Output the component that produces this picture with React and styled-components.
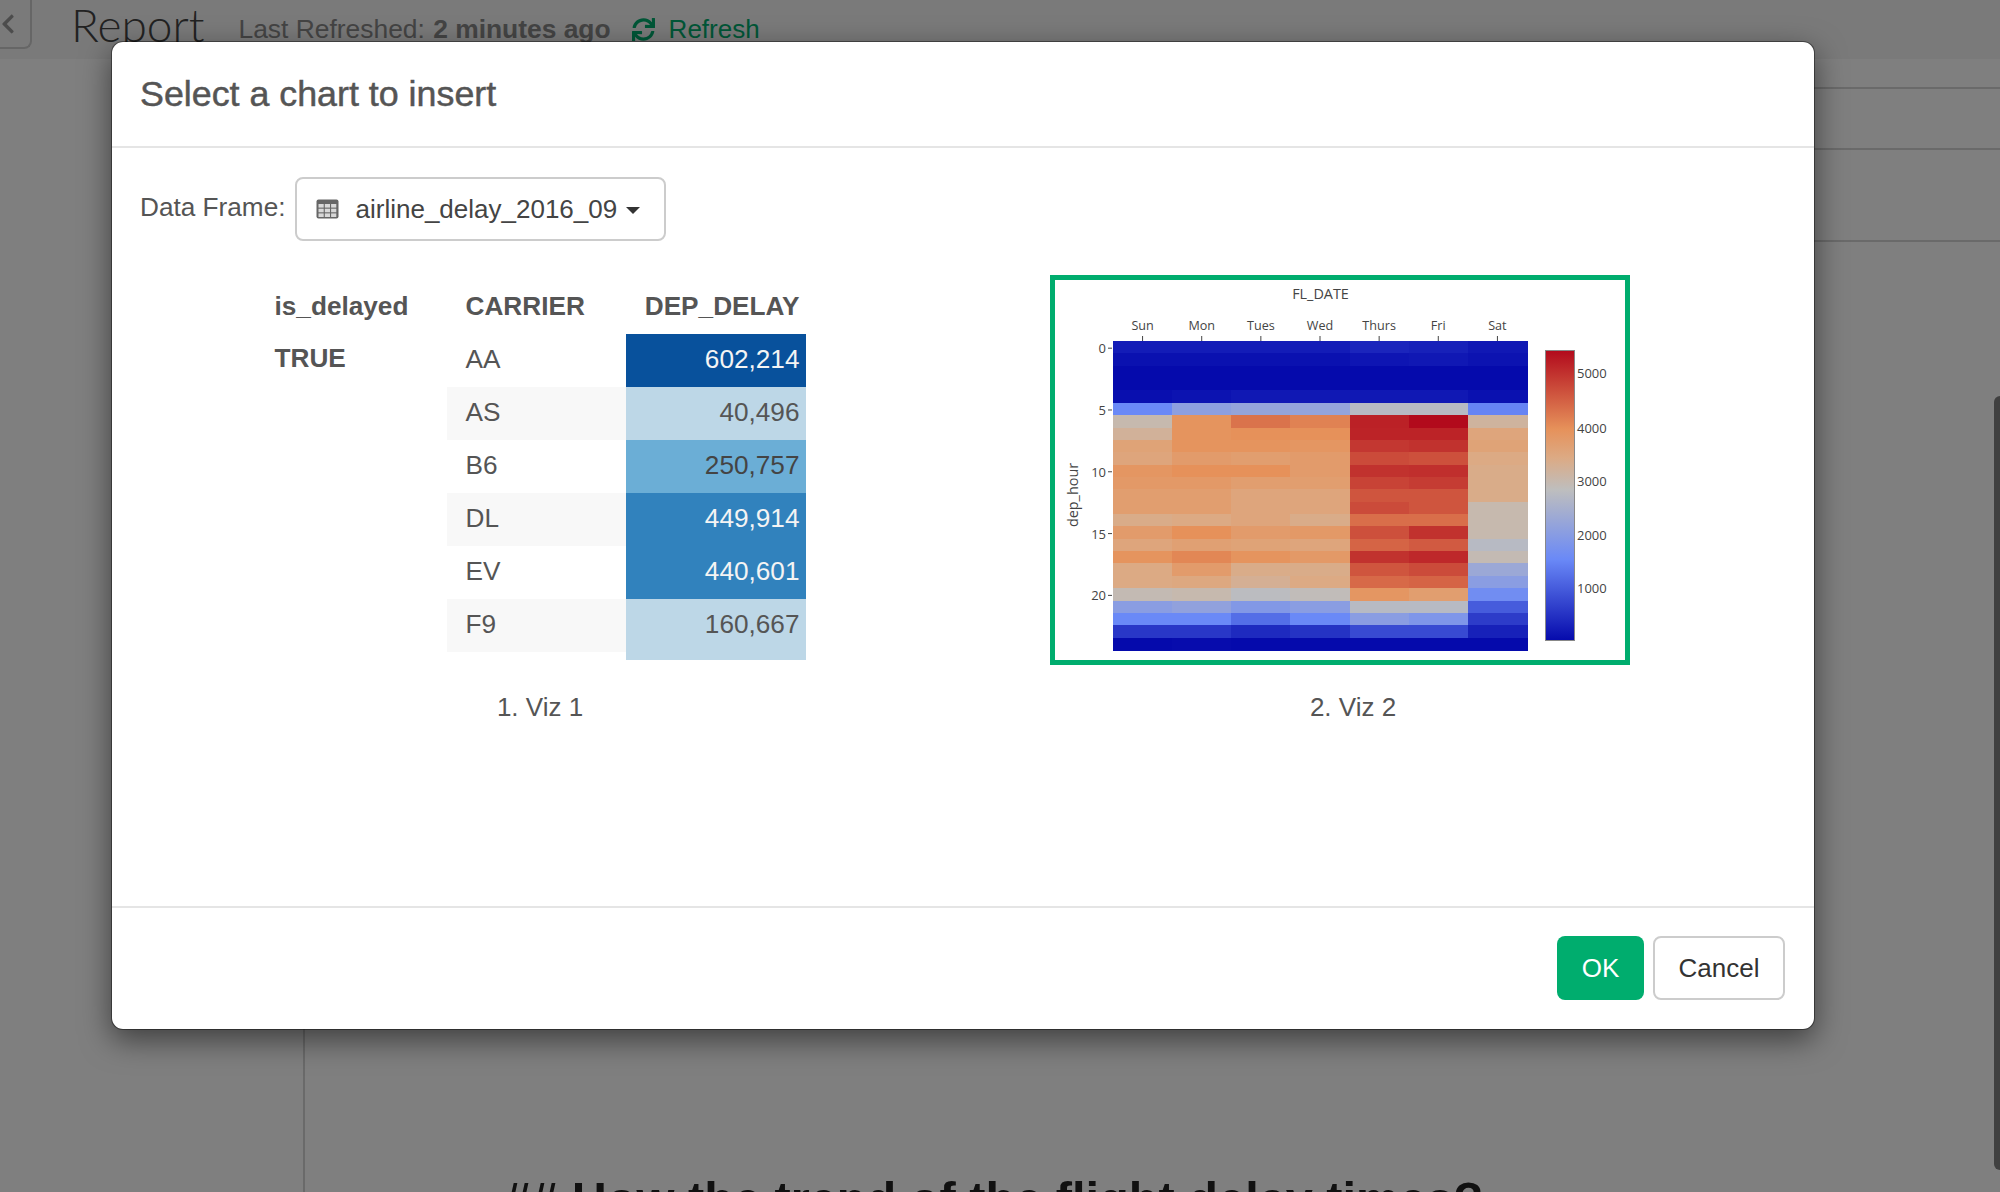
import React from "react"
import styled, { createGlobalStyle } from "styled-components"
import { FaChevronLeft, FaSync } from "react-icons/fa"

const GlobalStyle = createGlobalStyle`
  html, body {
    margin: 0;
    padding: 0;
    background: #fff;
  }
  body {
    font-family: "Liberation Sans", Arial, sans-serif;
    overflow: hidden;
  }
`

const Page = styled.div`
  position: relative;
  width: 2000px;
  height: 1192px;
  overflow: hidden;
  background: #fff;
`

const TopBar = styled.header`
  height: 59px;
  background: #f4f4f4;
  display: flex;
  align-items: flex-start;
`

const BackButton = styled.button`
  width: 32px;
  height: 49px;
  border: 2px solid #ccc;
  border-left: none;
  border-top: none;
  border-radius: 0 0 8px 0;
  background: #f4f4f4;
  color: #999;
  padding: 0;
  display: flex;
  align-items: flex-start;
  font-size: 22px;
  svg {
    margin: 13px 0 0 -3px;
  }
`

const PageTitle = styled.h1`
  margin: 2px 0 0 39px;
  font-family: "Lato", "Liberation Sans", sans-serif;
  font-weight: 300;
  font-size: 46px;
  line-height: 46px;
  color: #444;
`

const RefreshInfo = styled.div`
  margin: 13px 0 0 34px;
  font-size: 26.4px;
  line-height: 32px;
  color: #888;
  b {
    margin-left: 1px;
  }
`

const RefreshLink = styled.a`
  margin: 13px 0 0 21px;
  display: flex;
  align-items: center;
  gap: 14px;
  font-size: 26px;
  line-height: 32px;
  color: #00ad6e;
`

const Workspace = styled.div`
  display: grid;
  grid-template-columns: 305px 1fr;
  height: 1133px;
`

const Sidebar = styled.aside`
  border-right: 2px solid #d4d4d4;
`

const Editor = styled.main`
  display: flex;
  flex-direction: column;
`

const ToolRow = styled.div`
  height: ${(p) => p.$height}px;
  border-bottom: 2px solid #d4d4d4;
  box-sizing: border-box;
`

const DocHeading = styled.h2`
  margin: 929px 0 0 199px;
  font-size: 48.7px;
  line-height: 56px;
  font-weight: 700;
  color: #222;
  white-space: nowrap;
`

const Scrollbar = styled.div`
  position: absolute;
  right: 0;
  top: 396px;
  width: 6px;
  height: 774px;
  background: #808080;
  border-radius: 6px 0 0 6px;
`

const Overlay = styled.div`
  position: absolute;
  inset: 0;
  background: rgba(0, 0, 0, 0.5);
  padding: 41px 0 0 111px;
`

const Modal = styled.div`
  width: 1704px;
  height: 989px;
  box-sizing: border-box;
  display: flex;
  flex-direction: column;
  background: #fff;
  border: 1px solid rgba(0, 0, 0, 0.4);
  border-radius: 12px;
  box-shadow: 0 10px 30px rgba(0, 0, 0, 0.5);
  background-clip: padding-box;
`

const ModalHeader = styled.div`
  height: 106px;
  box-sizing: border-box;
  padding-left: 28px;
  display: flex;
  align-items: center;
  border-bottom: 2px solid #e5e5e5;
`

const ModalTitle = styled.h4`
  margin: 0;
  font-size: 35.8px;
  font-weight: 400;
  color: #555;
  -webkit-text-stroke: 0.5px #555;
`

const ModalBody = styled.div`
  flex: 1;
  padding: 29px 0 0 28px;
`

const FrameRow = styled.div`
  display: flex;
  align-items: center;
  gap: 9px;
  height: 64px;
`

const FieldLabel = styled.label`
  font-size: 26.2px;
  color: #555;
  padding-bottom: 3px;
`

const Select = styled.button`
  width: 371px;
  height: 64px;
  box-sizing: border-box;
  display: flex;
  align-items: center;
  padding: 0 0 0 19px;
  background: #fff;
  border: 2px solid #ccc;
  border-radius: 8px;
  font-family: inherit;
  font-size: 26px;
  color: #444;
`

const SelectText = styled.span`
  margin-left: 17px;
  padding-top: 1px;
`

const Caret = styled.span`
  width: 0;
  height: 0;
  margin-left: 9px;
  margin-top: 2px;
  border-left: 7px solid transparent;
  border-right: 7px solid transparent;
  border-top: 7px solid #333;
`

const VizGrid = styled.div`
  display: grid;
  grid-template-columns: 800px 800px;
  column-gap: 13px;
  margin-top: 34px;
`

const VizCard = styled.div`
  display: flex;
  flex-direction: column;
`

const Preview = styled.div`
  height: 390px;
  display: flex;
  justify-content: center;
  align-items: flex-start;
`

const Caption = styled.div`
  margin-top: 26px;
  font-size: 26px;
  line-height: 32px;
  text-align: center;
  color: #555;
`

const Table = styled.table`
  width: 531px;
  table-layout: fixed;
  border-collapse: collapse;
  margin-top: 6px;
  font-size: 26.2px;
  color: #555;
`

const HeadCell = styled.th`
  height: 53px;
  padding: 0 ${(p) => (p.$right ? "6px" : "0")} 2px ${(p) => (p.$pad ? "19px" : "0")};
  text-align: ${(p) => (p.$right ? "right" : "left")};
  font-weight: 700;
  box-sizing: border-box;
`

const GroupCell = styled.td`
  vertical-align: top;
  font-weight: 700;
  padding: 8px 0 0;
  line-height: 32px;
`

const CarrierCell = styled.td`
  height: 53px;
  padding: 0 0 2px 19px;
  box-sizing: border-box;
  background: ${(p) => (p.$striped ? "#f8f8f8" : "#fff")};
`

const ValueCell = styled.td`
  text-align: right;
  padding: 0 6px 2px 0;
  background: ${(p) => p.$bg};
  color: ${(p) => p.$fg};
`

const TailRow = styled.tr`
  height: 8px;
`

const ChartFrame = styled.div`
  width: 580px;
  height: 390px;
  box-sizing: border-box;
  margin-right: 26px;
  border: 5px solid #00ad6e;
`

const ChartSvg = styled.svg`
  display: block;
  font-family: "Open Sans", "Liberation Sans", sans-serif;
  fill: #444;
`

const OkButton = styled.button`
  width: 87px;
  height: 64px;
  border: none;
  border-radius: 8px;
  background: #00ad6e;
  color: #fff;
  font-family: inherit;
  font-size: 26px;
`

const CancelButton = styled.button`
  width: 132px;
  height: 64px;
  border: 2px solid #ccc;
  border-radius: 8px;
  background: #fff;
  color: #333;
  font-family: inherit;
  font-size: 26px;
`

const ModalFooter = styled.div`
  height: 123px;
  box-sizing: border-box;
  padding: 28px 29px 0 0;
  border-top: 2px solid #e5e5e5;
  display: flex;
  justify-content: flex-end;
  gap: 9px;
`

const rows = [
  { carrier: "AA", value: "602,214", bg: "#08519c", fg: "#f4f4f4" },
  { carrier: "AS", value: "40,496", bg: "#bdd7e7", fg: "#555" },
  { carrier: "B6", value: "250,757", bg: "#6baed6", fg: "#444" },
  { carrier: "DL", value: "449,914", bg: "#3182bd", fg: "#f4f4f4" },
  { carrier: "EV", value: "440,601", bg: "#3182bd", fg: "#f4f4f4" },
  { carrier: "F9", value: "160,667", bg: "#bdd7e7", fg: "#555" },
]

const days = ["Sun", "Mon", "Tues", "Wed", "Thurs", "Fri", "Sat"]

// share of the colour scale per hour (row) and weekday (column)
const heat = [
  [0.04, 0.04, 0.04, 0.04, 0.06, 0.05, 0.03],
  [0.015, 0.015, 0.015, 0.015, 0.025, 0.03, 0.02],
  [0, 0, 0, 0, 0, 0, 0],
  [0, 0, 0, 0, 0, 0, 0],
  [0.01, 0.02, 0.03, 0.03, 0.03, 0.03, 0.015],
  [0.28, 0.38, 0.4, 0.4, 0.5, 0.5, 0.27],
  [0.55, 0.72, 0.79, 0.76, 0.955, 1, 0.58],
  [0.59, 0.72, 0.73, 0.73, 0.95, 0.95, 0.65],
  [0.66, 0.72, 0.72, 0.71, 0.91, 0.92, 0.66],
  [0.65, 0.69, 0.68, 0.69, 0.87, 0.86, 0.63],
  [0.71, 0.73, 0.73, 0.69, 0.92, 0.925, 0.62],
  [0.7, 0.7, 0.68, 0.68, 0.885, 0.9, 0.62],
  [0.68, 0.68, 0.65, 0.65, 0.85, 0.85, 0.62],
  [0.68, 0.68, 0.65, 0.65, 0.87, 0.85, 0.55],
  [0.62, 0.63, 0.65, 0.62, 0.8, 0.8, 0.55],
  [0.69, 0.73, 0.69, 0.7, 0.86, 0.92, 0.55],
  [0.65, 0.67, 0.66, 0.65, 0.82, 0.84, 0.5],
  [0.72, 0.75, 0.72, 0.7, 0.92, 0.94, 0.54],
  [0.63, 0.69, 0.62, 0.62, 0.85, 0.87, 0.42],
  [0.63, 0.64, 0.6, 0.63, 0.81, 0.82, 0.37],
  [0.54, 0.55, 0.51, 0.53, 0.71, 0.68, 0.3],
  [0.37, 0.39, 0.35, 0.37, 0.5, 0.5, 0.18],
  [0.28, 0.28, 0.22, 0.28, 0.37, 0.34, 0.11],
  [0.1, 0.1, 0.07, 0.09, 0.14, 0.14, 0.05],
  [0, 0.005, 0, 0, 0, 0, 0],
]

const scale = [
  [0, [5, 10, 172]],
  [0.28, [106, 137, 247]],
  [0.52, [190, 190, 190]],
  [0.63, [220, 170, 132]],
  [0.73, [230, 145, 90]],
  [1, [178, 10, 28]],
]

function colorAt(t) {
  for (let i = 1; i < scale.length; i++) {
    const [t0, c0] = scale[i - 1]
    const [t1, c1] = scale[i]
    if (t <= t1) {
      const k = (t - t0) / (t1 - t0)
      const c = c0.map((v, j) => Math.round(v + (c1[j] - v) * k))
      return `rgb(${c.join(",")})`
    }
  }
  return "rgb(178,10,28)"
}

const HEAT_X = 58
const HEAT_Y = 61
const CELL_W = 414 / 7
const CELL_H = 309 / 25

function Heatmap() {
  return (
    <ChartSvg width="570" height="380" viewBox="0 0 570 380">
      <defs>
        <linearGradient id="bar" x1="0" y1="1" x2="0" y2="0">
          {scale.map(([t]) => (
            <stop key={t} offset={t} stopColor={colorAt(t)} />
          ))}
        </linearGradient>
      </defs>
      <text x="265.5" y="19" fontSize="14.4" textAnchor="middle">FL_DATE</text>
      {days.map((d, i) => {
        const x = HEAT_X + CELL_W * (i + 0.5)
        return (
          <g key={d}>
            <text x={x} y="50" fontSize="12.6" textAnchor="middle">{d}</text>
            <line x1={x} x2={x} y1="56" y2="61" stroke="#444" />
          </g>
        )
      })}
      {[0, 5, 10, 15, 20].map((h) => {
        const y = HEAT_Y + CELL_H * (h + 0.5) + 1
        return (
          <g key={h}>
            <text x="51" y={y + 5} fontSize="13" textAnchor="end">{h}</text>
            <line x1="53" x2="57" y1={y} y2={y} stroke="#444" />
          </g>
        )
      })}
      <text
        transform="translate(23 215) rotate(-90)"
        fontSize="14.4"
        textAnchor="middle"
      >
        dep_hour
      </text>
      <g shapeRendering="crispEdges">
        {heat.map((row, r) =>
          row.map((t, c) => (
            <rect
              key={`${r}-${c}`}
              x={HEAT_X + CELL_W * c}
              y={HEAT_Y + CELL_H * r}
              width={CELL_W + 0.5}
              height={CELL_H + 0.5}
              fill={colorAt(t)}
            />
          ))
        )}
      </g>
      <rect x="490.5" y="70.5" width="29" height="290" fill="url(#bar)" stroke="#888" />
      {[[5000, 93], [4000, 148], [3000, 201], [2000, 255], [1000, 308]].map(([v, y]) => (
        <text key={v} x="522" y={y + 5} fontSize="13">{v}</text>
      ))}
    </ChartSvg>
  )
}

function TableIcon() {
  return (
    <svg width="23" height="20" viewBox="0 0 23 20">
      <rect x="0.5" y="0.5" width="22" height="19" rx="2" fill="#666" />
      <g fill="#fff">
        {[0, 1, 2].map((r) =>
          [0, 1, 2].map((c) => (
            <rect key={`${r}${c}`} x={2.5 + c * 6.3} y={5 + r * 4.7} width="5.2" height="3.6" fillOpacity="0.75" />
          ))
        )}
      </g>
    </svg>
  )
}

export default function App() {
  return (
    <Page>
      <GlobalStyle />
      <TopBar>
        <BackButton><FaChevronLeft /></BackButton>
        <PageTitle>Report</PageTitle>
        <RefreshInfo>Last Refreshed: <b>2 minutes ago</b></RefreshInfo>
        <RefreshLink><FaSync size={23} />Refresh</RefreshLink>
      </TopBar>
      <Workspace>
        <Sidebar />
        <Editor>
          <ToolRow $height={30} />
          <ToolRow $height={61} />
          <ToolRow $height={92} />
          <DocHeading>## How the trend of the flight delay times?</DocHeading>
        </Editor>
      </Workspace>
      <Scrollbar />
      <Overlay>
        <Modal>
          <ModalHeader>
            <ModalTitle>Select a chart to insert</ModalTitle>
          </ModalHeader>
          <ModalBody>
            <FrameRow>
              <FieldLabel>Data Frame:</FieldLabel>
              <Select>
                <TableIcon />
                <SelectText>airline_delay_2016_09</SelectText>
                <Caret />
              </Select>
            </FrameRow>
            <VizGrid>
              <VizCard>
                <Preview>
                  <Table>
                    <colgroup>
                      <col width="172" />
                      <col width="179" />
                      <col width="180" />
                    </colgroup>
                    <thead>
                      <tr>
                        <HeadCell>is_delayed</HeadCell>
                        <HeadCell $pad>CARRIER</HeadCell>
                        <HeadCell $right>DEP_DELAY</HeadCell>
                      </tr>
                    </thead>
                    <tbody>
                      {rows.map((row, i) => (
                        <tr key={row.carrier}>
                          {i === 0 && <GroupCell rowSpan={7}>TRUE</GroupCell>}
                          <CarrierCell $striped={i % 2 === 1}>{row.carrier}</CarrierCell>
                          <ValueCell $bg={row.bg} $fg={row.fg}>{row.value}</ValueCell>
                        </tr>
                      ))}
                      <TailRow>
                        <td />
                        <ValueCell $bg="#bdd7e7" />
                      </TailRow>
                    </tbody>
                  </Table>
                </Preview>
                <Caption>1. Viz 1</Caption>
              </VizCard>
              <VizCard>
                <Preview>
                  <ChartFrame>
                    <Heatmap />
                  </ChartFrame>
                </Preview>
                <Caption>2. Viz 2</Caption>
              </VizCard>
            </VizGrid>
          </ModalBody>
          <ModalFooter>
            <OkButton>OK</OkButton>
            <CancelButton>Cancel</CancelButton>
          </ModalFooter>
        </Modal>
      </Overlay>
    </Page>
  )
}
